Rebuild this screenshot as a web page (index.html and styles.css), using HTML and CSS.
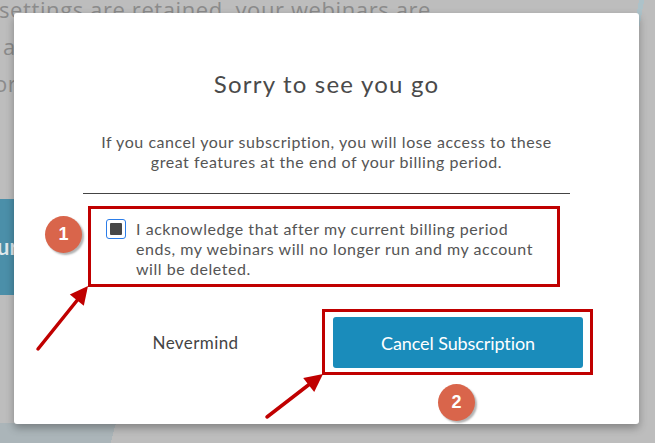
FILE: index.html
```html
<!DOCTYPE html>
<html lang="en">
<head>
<meta charset="utf-8">
<title>Cancel subscription</title>
<link rel="stylesheet" href="styles.css">
</head>
<body>
<div class="page">
  <div class="bg-text">
    <div class="bg-line l1">settings are retained, your webinars are</div>
    <div class="bg-line l2">and your account data is kept safe</div>
    <div class="bg-line l3">or you can reactivate at any time</div>
  </div>
  <div class="bg-button">ur</div>
</div>

<div class="modal">
  <h2 class="title">Sorry to see you go</h2>
  <p class="lead">If you cancel your subscription, you will lose access to these great features at the end of your billing period.</p>
  <hr class="divider">
  <label class="ack">
    <span class="checkbox"><span class="check-fill"></span></span>
    <span class="ack-text">I acknowledge that after my current billing period ends, my webinars will no longer run and my account will be deleted.</span>
  </label>
  <div class="actions">
    <button class="btn-link" type="button">Nevermind</button>
    <div class="annot-btn"><button class="btn-primary" type="button">Cancel Subscription</button></div>
  </div>
</div>

<svg class="arrows" width="655" height="443" viewBox="0 0 655 443" aria-hidden="true">
  <line x1="38" y1="349" x2="79" y2="298" stroke="#c00000" stroke-width="3.5" stroke-linecap="round"/>
  <polygon points="88,286 83.8,305.7 69.8,294.5" fill="#c00000"/>
  <line x1="267" y1="417" x2="311" y2="383" stroke="#c00000" stroke-width="3.5" stroke-linecap="round"/>
  <polygon points="323,374 314.2,392.1 303.2,377.9" fill="#c00000"/>
</svg>
<span class="badge b1">1</span>
<span class="badge b2">2</span>
</body>
</html>
```
FILE: styles.css
```css
html, body {
  margin: 0;
  padding: 0;
}
body {
  width: 655px;
  height: 443px;
  overflow: hidden;
  position: relative;
  background-color: #bdbdbd;
  background-image:
    linear-gradient(105deg, #abb5b9 0, #abb5b9 112px, transparent 112px),
    linear-gradient(100deg, transparent 0, transparent 6px, #adc2c9 6px, #adc2c9 11px, transparent 11px);
  background-repeat: no-repeat;
  background-position: left bottom, right top;
  background-size: 140px 20px, 22px 44px;
  font-family: "Lato", "Open Sans", sans-serif;
}

/* dimmed page behind the dialog */
.page {
  color: #8b8b8b;
}
.bg-text {
  margin-top: -9px;
  font-family: "Open Sans", sans-serif;
  font-size: 22px;
  line-height: 37px;
  letter-spacing: 0.6px;
  white-space: nowrap;
}
.l1 { margin-left: -1px; }
.l2 { margin-left: 3px; }
.l3 { margin-left: -6px; }
.bg-button {
  margin-top: 97px;
  width: 120px;
  height: 96px;
  line-height: 96px;
  background: #4b8fa9;
  color: #dfe8ec;
  font-weight: 700;
  font-size: 22px;
  text-indent: -3px;
}

/* dialog */
.modal {
  position: absolute;
  top: 13px;
  left: 14px;
  width: 625px;
  height: 411px;
  box-sizing: border-box;
  padding: 56px 69px 0;
  background: #fff;
  border-radius: 3px;
  box-shadow: 0 4px 8px rgba(0, 0, 0, 0.3);
  display: flex;
  flex-direction: column;
}
.title {
  margin: 0;
  font-size: 24px;
  line-height: 29px;
  font-weight: 400;
  letter-spacing: 1.2px;
  color: #4a4a4a;
  text-align: center;
}
.lead {
  margin: 34px auto 0;
  width: 470px;
  font-size: 16px;
  line-height: 20px;
  letter-spacing: 0.55px;
  color: #555;
  text-align: center;
}
.divider {
  margin: 21px 0 0;
  border: 0;
  border-top: 1px solid #444;
  height: 0;
}
.ack {
  margin: 12px 0 0 5px;
  width: 472px;
  box-sizing: border-box;
  border: 3px solid #c00000;
  padding: 10px 16px 5px 15px;
  display: flex;
  gap: 10px;
  font-size: 16px;
  line-height: 20px;
  letter-spacing: 0.55px;
  color: #555;
}
.checkbox {
  flex: none;
  width: 20px;
  height: 20px;
  box-sizing: border-box;
  border: 1px solid #2b7de9;
  border-radius: 3px;
  display: flex;
  align-items: center;
  justify-content: center;
}
.check-fill {
  width: 12px;
  height: 12px;
  background: #474747;
  border-radius: 1px;
}
.actions {
  margin: 22px -23px 0 0;
  display: flex;
  align-items: center;
}
.btn-link {
  width: 225px;
  padding: 0;
  border: 0;
  background: none;
  font-family: "Lato", sans-serif;
  font-size: 17px;
  letter-spacing: 0.4px;
  color: #444;
  text-align: center;
}
.annot-btn {
  margin-left: 14px;
  border: 3px solid #c00000;
  padding: 5px 7px 4px 8px;
  display: flex;
}
.btn-primary {
  width: 250px;
  height: 51px;
  border: 0;
  border-radius: 3px;
  background: #1a8cbb;
  color: #fff;
  font-family: "Lato", sans-serif;
  font-size: 18px;
  letter-spacing: -0.1px;
}

/* annotations */
.arrows {
  position: absolute;
  left: 0;
  top: 0;
  pointer-events: none;
}
.badge {
  position: absolute;
  width: 37px;
  height: 37px;
  border-radius: 50%;
  background: #d9654b;
  box-shadow: 2px 2px 2px rgba(0, 0, 0, 0.3);
  color: #fff;
  font-family: "Liberation Sans", Arial, sans-serif;
  font-weight: 700;
  font-size: 18px;
  display: flex;
  align-items: center;
  justify-content: center;
}
.b1 { left: 45px; top: 216px; }
.b2 { left: 438px; top: 384px; }
```
